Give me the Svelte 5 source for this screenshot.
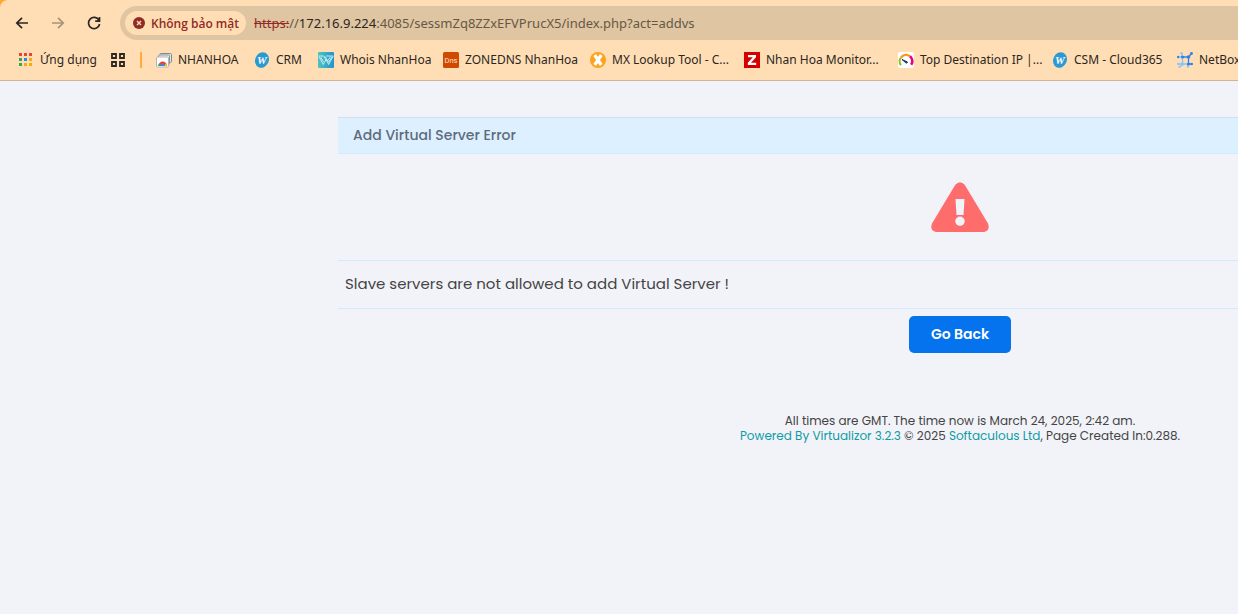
<script>
  const bookmarks = [
    { icon: 'folder', label: 'NHANHOA', width: 98 },
    { icon: 'w', label: 'CRM', width: 64 },
    { icon: 'whois', label: 'Whois NhanHoa', width: 125 },
    { icon: 'dns', label: 'ZONEDNS NhanHoa', width: 147 },
    { icon: 'mx', label: 'MX Lookup Tool - C...', width: 154 },
    { icon: 'z', label: 'Nhan Hoa Monitor...', width: 154 },
    { icon: 'gauge', label: 'Top Destination IP |...', width: 154 },
    { icon: 'w', label: 'CSM - Cloud365', width: 125 },
    { icon: 'net', label: 'NetBox', width: 84 }
  ];
  const appDots = ['#ea4335', '#ea4335', '#ea4335', '#34a853', '#1a8cff', '#fbaa05', '#34a853', '#fbaa05', '#fbaa05'];
</script>

{#snippet favicon(name)}
  <svg class="fav" viewBox="0 0 16 16" aria-hidden="true">
    {#if name === 'folder'}
      <rect x="4" y="1.500" width="11.5" height="9" rx="1" fill="#dfe1e4" stroke="#85888c" />
      <rect x="2.5" y="3" width="11" height="9.500" rx="1" fill="#eceef0" stroke="#909397" />
      <rect x="0.5" y="5" width="12" height="10" rx="1" fill="#fff" stroke="#b1b3b6" />
      <path d="M2.3 14a4.4 4.4 0 0 1 8.800 0z" fill="#ea4335" />
      <path d="M2.3 14a4.4 4.4 0 0 1 .9-2.700L6 14z" fill="#34a853" />
      <path d="M11.1 14a4.4 4.4 0 0 0-.9-2.700L7.5 14z" fill="#fbbc05" />
      <path d="M4.5 14a2.200 2.200 0 0 1 4.400 0z" fill="#3b82f6" />
    {:else if name === 'w'}
      <ellipse cx="8" cy="8" rx="6.800" ry="8" transform="rotate(25 8 8)" fill="#2c99d3" />
      <text x="8" y="12" text-anchor="middle" font-family="Liberation Serif, serif" font-size="11" font-weight="bold" font-style="italic" fill="#fff">W</text>
    {:else if name === 'whois'}
      <defs><linearGradient id="whois-bg"><stop stop-color="#4fc3bd" /><stop offset="1" stop-color="#2492cf" /></linearGradient></defs>
      <rect width="16" height="16" rx="1" fill="url(#whois-bg)" />
      <path d="M.8 4h5l2.700 5M1 4.500l4.300 8 2.700-5 2.700 5 4.500-8.500H8M2.700 5l2.800 5M10.500 10.500L14 5M7 4.500l3.500 5.500M12.5 4.500l-2.500 4" fill="none" stroke="#c9f5f4" stroke-width=".9" />
    {:else if name === 'dns'}
      <rect width="16" height="16" rx="1.5" fill="#d14900" />
      <text x="8" y="11" text-anchor="middle" font-family="Roboto, sans-serif" font-size="7.500" fill="#ffe3cf">Dns</text>
    {:else if name === 'mx'}
      <circle cx="8" cy="8" r="8" fill="#fba31d" />
      <path d="M4.700 3l6.600 10M11.300 3L4.700 13" stroke="#fff" stroke-width="3.200" />
    {:else if name === 'z'}
      <rect width="16" height="16" fill="#d40000" />
      <path d="M4 3h8v2.2L7 10.8h5.2V13H3.8v-2.2l5-5.6H4z" fill="#fff" />
    {:else if name === 'gauge'}
      <rect width="16" height="16" rx="2" fill="#fff" />
      <path d="M3 13A6 6 0 0 1 3 5.500" fill="none" stroke="#91bd27" stroke-width="2" />
      <path d="M3 5.500a6.200 6.200 0 0 1 9-1.200" fill="none" stroke="#f59b1f" stroke-width="2.2" />
      <path d="M12 4.300a6.200 6.200 0 0 1 1.200 8.500" fill="none" stroke="#e6007e" stroke-width="2.6" />
      <path d="M4 7.500l5.500 2.500-1 1.300z" fill="#173a5e" stroke="#173a5e" />
    {:else}
      <path d="M1 12h4.5V5H1.5M5.5 12H11v3M5.5 12l-3 3.5M5.5 5L4.5 1" fill="none" stroke="#8cc4f5" stroke-width="1.3" />
      <path d="M5 5h6.5v7H15M11.5 5l3-3.5" fill="none" stroke="#2f80ed" stroke-width="1.3" />
      <g fill="#8cc4f5"><circle cx="5.5" cy="12" r="1.7" /><circle cx="1.3" cy="12" r="1.3" /><circle cx="2.3" cy="15" r="1" /><circle cx="4.5" cy="1.3" r="1.2" /><circle cx="11" cy="14.8" r="1.1" /></g>
      <g fill="#2f80ed"><circle cx="5.5" cy="5" r="1.6" /><circle cx="11.5" cy="5" r="1.8" /><circle cx="11.5" cy="12" r="1.6" /><circle cx="14.5" cy="1.5" r="1.4" /><circle cx="14.8" cy="12" r="1.2" /><circle cx="1.2" cy="5" r="1.2" /></g>
    {/if}
  </svg>
{/snippet}

<div class="window">
  <header class="chrome">
    <div class="toolbar">
      <div class="tools">
        <button class="tool" aria-label="Back">
          <svg viewBox="0 0 16 16"><path d="M14 8H3M8 2.8L2.8 8 8 13.2" /></svg>
        </button>
        <button class="tool dim" aria-label="Forward">
          <svg viewBox="0 0 16 16"><path d="M2 8h11M8 2.8L13.2 8 8 13.2" /></svg>
        </button>
        <button class="tool" aria-label="Reload">
          <svg viewBox="0 0 16 16"><path d="M13 5.3A5.6 5.6 0 1 0 13.6 9M13.5 2v4.2H9.2" /></svg>
        </button>
      </div>
      <div class="address">
        <button class="security">
          <svg viewBox="0 0 12 12" aria-hidden="true"><circle cx="6" cy="6" r="6" fill="#922a25" /><path d="M4 4l4 4M8 4L4 8" stroke="#ffdeb5" stroke-width="1.4" /></svg>
          Không bảo mật
        </button>
        <div class="url" role="textbox" tabindex="0" aria-label="URL" contenteditable="true"><span class="scheme">https:</span>//<span class="host">172.16.9.224</span>:4085/sessmZq8ZZxEFVPrucX5/index.php?act=addvs</div>
      </div>
    </div>
    <nav class="bookmarks">
      <a class="bookmark" href="#apps" style:width="92px">
        <svg class="fav" viewBox="0 0 16 16" aria-hidden="true">
          {#each appDots as color, i}
            <rect x={1 + (i % 3) * 5} y={1 + Math.floor(i / 3) * 5} width="3" height="3" fill={color} />
          {/each}
        </svg>
        Ứng dụng
      </a>
      <button class="groups" aria-label="Tab groups">
        <svg class="fav" viewBox="0 0 16 16"><path d="M2 2h4v4H2zM10 2h4v4h-4zM2 10h4v4H2zM10 10h4v4h-4z" fill="none" stroke="#2b2622" stroke-width="1.8" /></svg>
      </button>
      <span class="divider"></span>
      {#each bookmarks as b}
        <a class="bookmark" href="#bookmark" style:width="{b.width}px">{@render favicon(b.icon)}{b.label}</a>
      {/each}
    </nav>
  </header>

  <main class="page">
    <h1>Add Virtual Server Error</h1>
    <div class="alert">
      <svg viewBox="0 0 58 50" role="img" aria-label="Warning">
        <path fill="#ff6c6c" d="M24.300 2.800Q29-2.400 33.700 2.800L57 41.500Q59.500 48.500 53 50H5Q-1.500 48.500 1 41.500Z" />
        <path fill="#f2f3f8" d="M24.500 17h9l-1 16h-7z" />
        <circle cx="29" cy="39.300" r="4.700" fill="#f2f3f8" />
      </svg>
    </div>
    <p class="message">Slave servers are not allowed to add Virtual Server !</p>
    <button class="go-back">Go Back</button>
    <footer>
      All times are GMT. The time now is March 24, 2025, 2:42 am.<br />
      <a href="#virtualizor">Powered By Virtualizor 3.2.3</a> © 2025 <a href="#softaculous">Softaculous Ltd</a>, Page Created In:0.288.
    </footer>
  </main>
</div>

<style>
  :global(body) { margin: 0; background: #f2f3f8; }
  .window { overflow: hidden; background: #f2f3f8; min-height: 100vh; }
  .chrome {
    background: #ffdeb5;
    border-top-left-radius: 8px;
    border-bottom: 1px solid #ceb592;
    font-family: "Segoe UI", "Noto Sans", "Open Sans", sans-serif;
    color: #2b2622;
    box-shadow: -8px -8px 0 #ffa733;
  }
  button { border: 0; padding: 0; background: none; font: inherit; color: inherit; }
  .toolbar { display: flex; align-items: center; gap: 18px; padding: 6px 0 0 14px; }
  .tools { display: flex; gap: 20px; }
  .tool { display: flex; color: #2b2622; }
  .tool svg { width: 16px; height: 16px; fill: none; stroke: currentColor; stroke-width: 1.7; }
  .dim { color: #a6937a; }
  .address {
    flex: 1; display: flex; align-items: center; gap: 8px;
    height: 34px; padding-left: 5px; box-sizing: border-box;
    background: #dfc5a1; border-radius: 17px 0 0 17px;
  }
  .security {
    display: flex; align-items: center; gap: 6px; height: 24px; padding: 0 7px 0 8px;
    border-radius: 12px; background: #ffdeb5; color: #922a25;
    font-family: "Segoe UI", "Open Sans", sans-serif;
    font-size: 12px; font-weight: 600; white-space: nowrap;
  }
  .security svg { width: 12px; height: 12px; }
  .url { flex: 1; font-size: 13px; line-height: 18px; color: #665847; white-space: nowrap; outline: 0; }
  .scheme { color: #922a25; text-decoration: line-through; }
  .host { color: #2b2622; }
  .bookmarks { display: flex; align-items: center; height: 40px; padding-left: 10px; white-space: nowrap; }
  .bookmark {
    display: flex; align-items: center; gap: 6px; padding-left: 8px; box-sizing: border-box;
    color: #2b2622; text-decoration: none; font-size: 12px; line-height: 16px; flex: none;
  }
  .fav { width: 16px; height: 16px; flex: none; overflow: visible; }
  .groups { display: flex; padding: 0 8px; }
  .divider { width: 2px; height: 16px; margin: 0 6px; background: #ffaa3a; flex: none; }

  .page {
    display: flex; flex-direction: column;
    min-width: 1244px; margin: 36px 0 0 338px; box-sizing: border-box;
    font-family: Poppins, Inter, "Open Sans", sans-serif; color: #444;
  }
  h1 {
    margin: 0; padding: 8px 15px; background: #ddf0ff; color: #5f6b7c;
    border-top: 1px solid #cfdfee; border-bottom: 1px solid #d3ebff;
    font-size: 14px; line-height: 19px; font-weight: 500;
  }
  .alert { display: flex; justify-content: center; padding: 28px 0; border-bottom: 1px solid #d3ebff; }
  .alert svg { width: 58px; height: 50px; }
  .message { margin: 0; padding: 11px 7px 12px; border-bottom: 1px solid #d3ebff; font-size: 15px; line-height: 24px; }
  .go-back {
    align-self: center; margin-top: 7px; padding: 8px 22px; border-radius: 5px;
    background: #0572ee; color: #fff; font-size: 14px; line-height: 21px; font-weight: 600;
  }
  footer { margin-top: 60px; text-align: center; font-size: 12px; line-height: 15px; }
  footer a { color: #0f9ba4; text-decoration: none; }
</style>
